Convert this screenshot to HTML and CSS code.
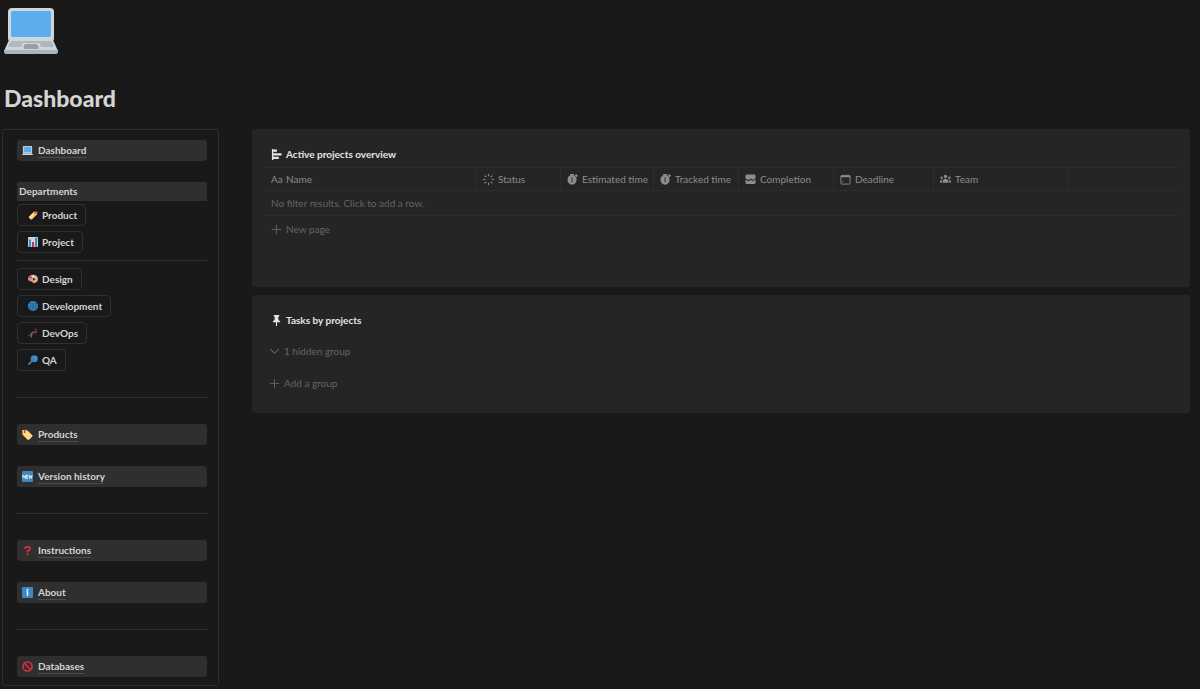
FILE: index.html
```html
<!DOCTYPE html>
<html lang="en">
<head>
  <meta charset="UTF-8">
  <meta name="viewport" content="width=device-width, initial-scale=1.0">
  <title>Dashboard</title>
  <link rel="stylesheet" href="styles.css">
</head>
<body>
  <header class="page-header">
    <svg class="page-icon" viewBox="0 0 54 46" aria-hidden="true">
      <rect x="4" y="0" width="46" height="34" rx="4" fill="#ccd6dd"/>
      <rect x="7" y="3" width="40" height="26" rx="2" fill="#5dadec"/>
      <path d="M5 32h44l5 11H0z" fill="#ccd6dd"/>
      <path d="M8 33h38q1.500 0 2 1.500l1.500 3q.5 1.500-1 1.500H37l-1.500-4h-17L17 39H5.500q-1.500 0-1-1.500L6 34.500Q6.500 33 8 33z" fill="#aeb8bf"/>
      <path d="M22 36h10q1.500 0 2 1.500l.5 2q.5 1.500-1 1.500h-13q-1.500 0-1-1.500l.5-2Q20.500 36 22 36z" fill="#9b9fa3"/>
      <path d="M0 42h54v2q0 2-2 2H2q-2 0-2-2z" fill="#aab4ba"/>
    </svg>
    <h1>Dashboard</h1>
  </header>

  <div class="layout">
    <nav class="sidebar">
      <a class="nav-link" href="#">
        <svg class="emoji" viewBox="0 0 12 12" aria-hidden="true">
          <rect x="1" y="1" width="10" height="8" rx="1" fill="#ccd6dd"/>
          <rect x="2" y="2" width="8" height="6" fill="#5dadec"/>
          <path d="M1 9h10l1 2H0z" fill="#ccd6dd"/>
        </svg>
        <span>Dashboard</span>
      </a>

      <h2 class="nav-heading">Departments</h2>
      <div class="departments">
        <button>
          <svg class="emoji" viewBox="0 0 12 12" aria-hidden="true">
            <path d="M1 8l6-6 3 0 1 3-6 6q-1 1-2 0l-2-2q-.5-.5 0-1z" fill="#ffd983"/>
            <path d="M4 11l6-6" stroke="#d99e4b" stroke-width="1"/>
            <circle cx="8.500" cy="3.800" r="1.200" fill="#c1694f"/>
            <path d="M9 3l2-1.500q1 1 0 3" stroke="#dd2e44" stroke-width=".8" fill="none"/>
          </svg>
          Product
        </button>
        <button>
          <svg class="emoji" viewBox="0 0 12 12" aria-hidden="true">
            <rect width="12" height="12" rx="1" fill="#ccd6dd"/>
            <rect x="1" y="3" width="2.500" height="9" fill="#3b88c3"/>
            <rect x="4.800" y="6" width="2.500" height="6" fill="#dd2e44"/>
            <rect x="8.500" y="1" width="2.500" height="11" fill="#3b88c3"/>
          </svg>
          Project
        </button>
      </div>
      <hr class="divider divider-tight">
      <div class="departments">
        <button>
          <svg class="emoji" viewBox="0 0 12 12" aria-hidden="true">
            <path d="M6 1c4 0 6 2 6 5s-2 5-5 5c-2 0-1-2-3-2S0 8 0 6s2-5 6-5z" fill="#d99e82"/>
            <circle cx="3" cy="4" r="1.400" fill="#dd2e44"/>
            <circle cx="6.500" cy="2.800" r="1.300" fill="#f4f4f4"/>
            <circle cx="9.500" cy="4.500" r="1.300" fill="#ffcc4d"/>
            <circle cx="9" cy="8" r="1.200" fill="#a6d388"/>
            <circle cx="2.500" cy="7" r="1.200" fill="#5dadec"/>
            <circle cx="7" cy="6.200" r="1.200" fill="#191919"/>
          </svg>
          Design
        </button>
        <button>
          <svg class="emoji" viewBox="0 0 12 12" aria-hidden="true">
            <circle cx="6" cy="6" r="6" fill="#3b94d9"/>
            <path d="M6 0v12M0 6h12M1 3q5 1.500 10 0M1 9q5-1.500 10 0M5 0q-5 6 0 12M7 0q5 6 0 12" stroke="#1d3f5c" stroke-width=".6" fill="none"/>
          </svg>
          Development
        </button>
        <button>
          <svg class="emoji" viewBox="0 0 12 12" aria-hidden="true">
            <path d="M4 11.500Q5 7 2.500 7.500M4.500 9Q3 4.500 6.500 5T11 4" stroke="#3b88c3" stroke-width="1.100" fill="none"/>
            <path d="M0 9q5 1.500 5-1.500T8.500 5t0-4.500" stroke="#c9363f" stroke-width="1.100" fill="none"/>
          </svg>
          DevOps
        </button>
        <button>
          <svg class="emoji" viewBox="0 0 12 12" aria-hidden="true">
            <path d="M1 11l4-4" stroke="#66757f" stroke-width="2.200" stroke-linecap="round"/>
            <circle cx="7.500" cy="4.500" r="4.300" fill="#3b88c3"/>
            <circle cx="9" cy="3" r="1" fill="#5dadec"/>
          </svg>
          QA
        </button>
      </div>
      <hr class="divider">
      <div class="nav-group">
        <a class="nav-link" href="#">
          <svg class="emoji" viewBox="0 0 12 12" aria-hidden="true">
            <path d="M0 2l1-1 5 .500 5 5q1 1 0 2l-3 3q-1 1-2 0l-5-5z" fill="#ffd983"/>
            <path d="M0 2l1 4.500 5 5" stroke="#d99e4b" stroke-width=".8" fill="none"/>
            <circle cx="2.800" cy="3.300" r="1" fill="#8a4b38"/>
            <path d="M2.500 3Q2 1 5 0" stroke="#dd2e44" stroke-width=".8" fill="none"/>
          </svg>
          <span>Products</span>
        </a>
        <a class="nav-link" href="#">
          <svg class="emoji" viewBox="0 0 12 12" aria-hidden="true">
            <rect width="12" height="12" rx="1" fill="#3b88c3"/>
            <path d="M1 8V4.500L3.500 8V4.500M6.500 4.500h-2V8h2M4.500 6.200h2M7.500 4.500L8.200 8l1-3 1 3 .8-3.500" stroke="#fff" stroke-width=".9" fill="none"/>
          </svg>
          <span>Version history</span>
        </a>
      </div>
      <hr class="divider">
      <div class="nav-group">
        <a class="nav-link" href="#">
          <svg class="emoji" viewBox="0 0 12 12" aria-hidden="true">
            <path d="M3.200 4Q3.200 2 6 2t2.800 2Q8.800 5.500 6 6.200V8" stroke="#dd2e44" stroke-width="1.800" fill="none"/>
            <circle cx="6" cy="10.200" r="1.100" fill="#dd2e44"/>
          </svg>
          <span>Instructions</span>
        </a>
        <a class="nav-link" href="#">
          <svg class="emoji" viewBox="0 0 12 12" aria-hidden="true">
            <rect width="12" height="12" rx="1" fill="#3b88c3"/>
            <circle cx="6" cy="3" r="1" fill="#fff"/>
            <path d="M4.800 5.300H6V9.500" stroke="#fff" stroke-width="1.600" fill="none"/>
          </svg>
          <span>About</span>
        </a>
      </div>
      <hr class="divider">
      <a class="nav-link" href="#">
        <svg class="emoji" viewBox="0 0 12 12" aria-hidden="true">
          <circle cx="6" cy="6" r="5" stroke="#dd2e44" stroke-width="1.600" fill="none"/>
          <path d="M2.500 2.500l7 7" stroke="#dd2e44" stroke-width="1.600"/>
        </svg>
        <span>Databases</span>
      </a>
    </nav>

    <main class="content">
      <section class="panel panel-projects">
        <h2 class="panel-title">
          <svg viewBox="0 0 12 12" aria-hidden="true">
            <path d="M1 0h1.500v12H1zM2 .5h4.500V3H2zM2 4.500h9.500V7H2zM2 8.500h6.500V11H2z"/>
          </svg>
          Active projects overview
        </h2>
        <table>
          <colgroup>
            <col class="col-name">
            <col class="col-status">
            <col class="col-estimated">
            <col class="col-tracked">
            <col class="col-completion">
            <col class="col-deadline">
            <col class="col-team">
            <col>
          </colgroup>
          <thead>
            <tr>
              <th><div class="cell"><span class="type-text">Aa</span>Name</div></th>
              <th>
                <div class="cell">
                  <svg viewBox="0 0 12 12" aria-hidden="true">
                    <path d="M6 0v2.500M6 9.500V12M0 6h2.500M9.500 6H12M1.800 1.800l1.700 1.700M8.500 8.500l1.700 1.700M1.800 10.200l1.700-1.700M8.500 3.500l1.700-1.700" stroke="currentColor" stroke-width="1.200"/>
                  </svg>
                  Status
                </div>
              </th>
              <th>
                <div class="cell">
                  <svg viewBox="0 0 12 12" aria-hidden="true">
                    <path fill-rule="evenodd" d="M5.500 1a5 5.300 0 1 0 0 10.600 5 5.300 0 0 0 0-10.600zM5 3.500h1V9H5z"/>
                    <path d="M3.500 0h4v1.500h-4zM8.500 1.500L10 0l2 2-1.500 1.500z"/>
                  </svg>
                  Estimated time
                </div>
              </th>
              <th>
                <div class="cell">
                  <svg viewBox="0 0 12 12" aria-hidden="true">
                    <path fill-rule="evenodd" d="M5.500 1a5 5.300 0 1 0 0 10.600 5 5.300 0 0 0 0-10.600zM5 3.500h1V9H5z"/>
                    <path d="M3.500 0h4v1.500h-4zM8.500 1.500L10 0l2 2-1.500 1.500z"/>
                  </svg>
                  Tracked time
                </div>
              </th>
              <th>
                <div class="cell">
                  <svg viewBox="0 0 12 12" aria-hidden="true">
                    <path d="M2 .5h8q1.500 0 1.500 1.500v2.500L8.500 6.500l-2-1.500L4 6.500l-3.500-1.500V2Q.5.500 2 .5zM.5 6.200L4 7.800l2.500-1.500 2 1.500 3-2V9.500Q11.500 11 10 11H2Q.5 11 .5 9.500z"/>
                  </svg>
                  Completion
                </div>
              </th>
              <th>
                <div class="cell">
                  <svg viewBox="0 0 12 12" aria-hidden="true">
                    <rect x="1" y="1.500" width="10" height="9.500" rx="1" stroke="currentColor" fill="none"/>
                    <path d="M1 1.500h10v2H1zM3 8h1v1H3z"/>
                  </svg>
                  Deadline
                </div>
              </th>
              <th>
                <div class="cell">
                  <svg viewBox="0 0 12 12" aria-hidden="true">
                    <circle cx="6" cy="2.700" r="1.800"/>
                    <circle cx="1.800" cy="4" r="1.300"/>
                    <circle cx="10.200" cy="4" r="1.300"/>
                    <path d="M2.800 9.500Q2.800 5.300 6 5.300t3.200 4.200zM0 9.500q0-3.500 2.500-3.500Q1.900 7 1.900 9.500zM12 9.500q0-3.500-2.500-3.500 .6 1 .6 3.500z"/>
                  </svg>
                  Team
                </div>
              </th>
              <th></th>
            </tr>
          </thead>
          <tbody>
            <tr>
              <td colspan="8">No filter results. Click to add a row.</td>
            </tr>
          </tbody>
        </table>
        <button class="action new-page">
          <svg viewBox="0 0 12 12" aria-hidden="true"><path d="M6 1v10M1 6h10" stroke="currentColor"/></svg>
          New page
        </button>
      </section>

      <section class="panel panel-tasks">
        <h2 class="panel-title">
          <svg viewBox="0 0 12 12" aria-hidden="true">
            <path d="M3 0h6v1.500H8V5l2 2v1H6.600v4H5.400V8H2V7l2-2V1.500H3z"/>
          </svg>
          Tasks by projects
        </h2>
        <button class="action">
          <svg viewBox="0 0 12 12" aria-hidden="true"><path d="M1.500 3.500L6 8l4.500-4.500" stroke="currentColor" stroke-width="1.200" fill="none"/></svg>
          1 hidden group
        </button>
        <button class="action">
          <svg viewBox="0 0 12 12" aria-hidden="true"><path d="M6 1v10M1 6h10" stroke="currentColor"/></svg>
          Add a group
        </button>
      </section>
    </main>
  </div>
</body>
</html>
```

FILE: styles.css
```css
/* General Styles */
* {
  box-sizing: border-box;
}

body {
  font-family: Lato, "Liberation Sans", sans-serif;
  font-size: 10px;
  line-height: 16px;
  background-color: #191919;
  color: #d4d4d4;
  margin: 0;
  padding: 8px 10px 3px 2px;
}

button {
  font: inherit;
  color: inherit;
  background: none;
  border: none;
  cursor: pointer;
}

svg {
  display: block;
  flex: none;
  fill: currentColor;
}

/* Header */
.page-header {
  padding: 0 2px;
}

.page-icon {
  width: 54px;
  height: 46px;
}

h1 {
  margin: 30px 0 17px;
  font-size: 23px;
  line-height: 28px;
  font-weight: 900;
}

.layout {
  display: flex;
  align-items: flex-start;
  gap: 33px;
}

/* Sidebar */
.sidebar {
  flex: none;
  width: 217px;
  padding: 10px 11px 8px 14px;
  border: 1px solid #2d2d2d;
  border-radius: 3px;
}

.nav-link {
  display: flex;
  align-items: center;
  gap: 5px;
  height: 21px;
  padding: 0 5px;
  border-radius: 3px;
  background-color: #2f2f2f;
  color: inherit;
  font-weight: bold;
  text-decoration: none;
}

.nav-link span {
  line-height: 13px;
  border-bottom: 1px solid #4b4b4b;
}

.emoji {
  width: 11px;
  height: 11px;
}

.nav-heading {
  margin: 21px 0 3px;
  padding: 0 2px;
  font-size: 10px;
  line-height: 19px;
  background-color: #2f2f2f;
}

.departments {
  display: flex;
  flex-direction: column;
  align-items: flex-start;
  gap: 5px;
}

.departments button {
  display: flex;
  align-items: center;
  gap: 4px;
  height: 22px;
  padding: 0 8px 0 10px;
  border: 1px solid #303030;
  border-radius: 4px;
  font-weight: bold;
}

.departments .emoji {
  width: 10px;
  height: 10px;
}

.divider {
  height: 1px;
  margin: 26px 0;
  border: none;
  background-color: #2f2f2f;
}

.divider-tight {
  margin: 7px 0;
}

.nav-group {
  display: flex;
  flex-direction: column;
  gap: 21px;
}

/* Content */
.content {
  flex: 1;
  min-width: 0;
}

.panel {
  padding: 16px 10px 0 14px;
  border-radius: 3px;
  background-color: #252525;
}

.panel-title {
  display: flex;
  align-items: center;
  gap: 4px;
  margin: 0;
  padding-left: 5px;
  font-size: 10px;
  line-height: 18px;
  color: #e4e4e4;
}

.panel-title svg {
  width: 11px;
  height: 11px;
}

.panel-projects {
  margin-bottom: 8px;
  padding-bottom: 45px;
}

.panel-tasks {
  padding-bottom: 20px;
}

/* Table */
table {
  width: 100%;
  margin-top: 4px;
  table-layout: fixed;
  border-spacing: 0;
}

.col-name {
  width: 211px;
}

.col-status {
  width: 84px;
}

.col-estimated {
  width: 93px;
}

.col-tracked {
  width: 85px;
}

.col-completion {
  width: 95px;
}

.col-deadline {
  width: 100px;
}

.col-team {
  width: 134px;
}

th {
  height: 24px;
  padding: 0 6px;
  border-top: 1px solid #2d2d2d;
  border-bottom: 1px solid #2d2d2d;
  border-right: 1px solid #2d2d2d;
  font-weight: normal;
  color: #8c8c8c;
  white-space: nowrap;
}

th:first-child {
  padding-left: 5px;
}

th:last-child {
  border-right: none;
}

.cell {
  display: flex;
  align-items: center;
  gap: 4px;
}

.cell svg {
  width: 11px;
  height: 11px;
}

.type-text {
  width: 11px;
}

td {
  height: 25px;
  padding: 0 5px;
  border-bottom: 1px solid #2d2d2d;
  color: #646464;
}

/* Actions */
.action {
  display: flex;
  align-items: center;
  gap: 4px;
  height: 20px;
  margin-top: 12px;
  padding: 0 3px;
  color: #646464;
}

.action svg {
  width: 11px;
  height: 11px;
}

.new-page {
  height: 26px;
  margin-top: 0;
  padding: 0 5px;
}
```
